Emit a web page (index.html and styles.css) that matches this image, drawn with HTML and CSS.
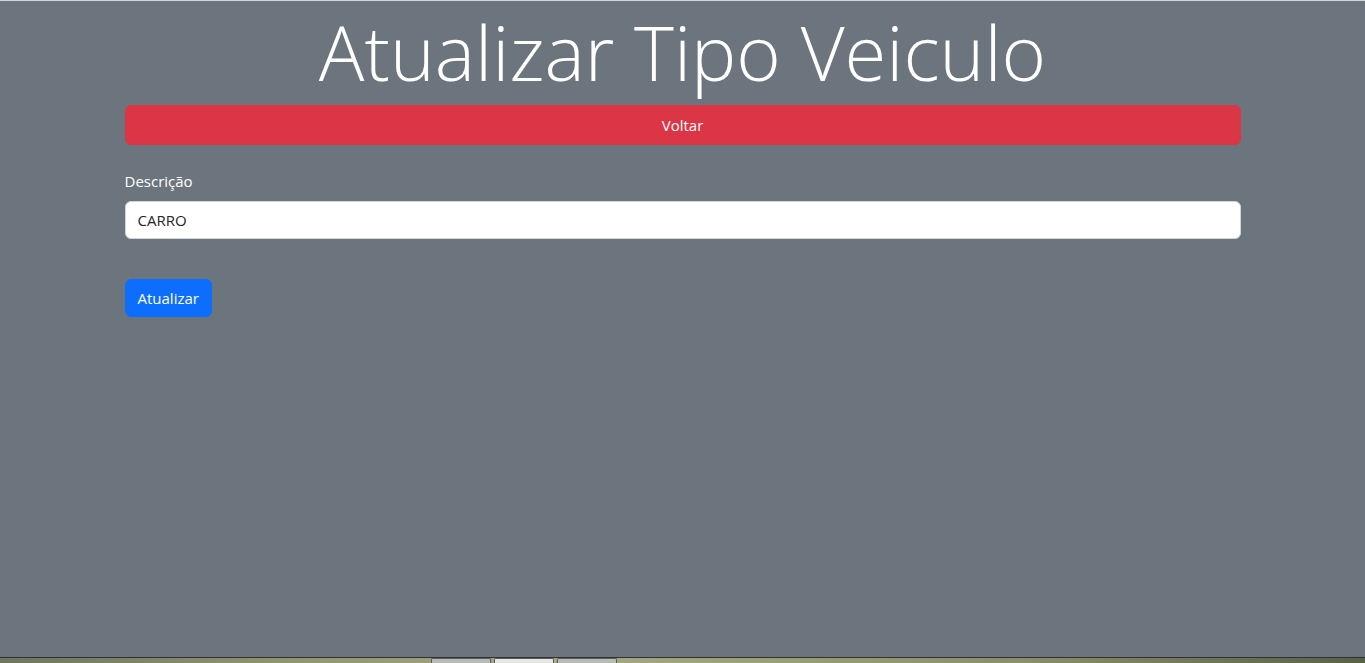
FILE: index.html
```html
<!DOCTYPE html>
<html lang="pt-BR">
<head>
<meta charset="utf-8">
<title>Atualizar Tipo Veiculo</title>
<link rel="stylesheet" href="styles.css">
</head>
<body>
<div class="page">
  <main class="container">
    <h1 class="title">Atualizar Tipo Veiculo</h1>
    <a class="btn btn-danger btn-block" href="#">Voltar</a>
    <form class="form">
      <label class="label" for="descricao">Descrição</label>
      <input class="input" id="descricao" type="text" value="CARRO">
      <button class="btn btn-primary" type="button">Atualizar</button>
    </form>
  </main>
  <div class="taskbar">
    <span class="tb-orb"></span>
    <span class="tb-gap"></span>
    <span class="tb-tab"></span>
    <span class="tb-tab light"></span>
    <span class="tb-tab"></span>
    <span class="tb-rest"></span>
  </div>
</div>
</body>
</html>
```

FILE: styles.css
```css
* { box-sizing: border-box; }
html, body { margin: 0; padding: 0; }
body {
  background: #6c757d;
  font-family: "Open Sans", "Noto Sans", "Liberation Sans", sans-serif;
  font-size: 15px;
  color: #fff;
}
.page {
  min-height: 100vh;
  display: flex;
  flex-direction: column;
  border-top: 1px solid #d4d6d8;
}
.container {
  flex: 1;
  width: 1140px;
  margin: 0 auto;
  padding: 0 12px;
}
.title {
  margin: 0 0 5px;
  padding-top: 3px;
  text-align: center;
  font-weight: 300;
  font-size: 76px;
  line-height: 96px;
  height: 99px;
}
.btn {
  display: inline-flex;
  align-items: center;
  justify-content: center;
  height: 38px;
  padding: 0 12px;
  border: 1px solid transparent;
  border-radius: 6px;
  font-family: inherit;
  font-size: 15px;
  color: #fff;
  text-decoration: none;
  cursor: pointer;
}
.btn-block { display: flex; width: 100%; height: 40px; }
.btn-danger { background: #dc3545; border-color: #dc3545; }
.btn-primary { background: #0d6efd; border-color: #0d6efd; }
.form {
  display: flex;
  flex-direction: column;
  align-items: flex-start;
  padding-top: 24px;
}
.label {
  line-height: 24px;
  margin-bottom: 8px;
}
.input {
  width: 100%;
  height: 38px;
  padding: 0 12px;
  border: 1px solid #ced4da;
  border-radius: 6px;
  background: #fff;
  font-family: inherit;
  font-size: 15px;
  color: #212529;
  margin-bottom: 40px;
}
.taskbar {
  height: 6px;
  display: flex;
  border-top: 1px solid #2e3132;
  background: linear-gradient(90deg, #6f7560 0%, #8e9370 20%, #a7a784 40%, #9aa077 55%, #8a8f6a 75%, #596048 100%);
}
.tb-orb { width: 30px; }
.tb-gap { width: 401px; }
.tb-tab {
  width: 60px;
  margin-right: 3px;
  background: #b9bcb4;
  border: 1px solid #5a5d58;
  border-bottom: 0;
  border-radius: 2px 2px 0 0;
}
.tb-tab.light { background: #e6e7e4; }
.tb-rest { flex: 1; }
```
